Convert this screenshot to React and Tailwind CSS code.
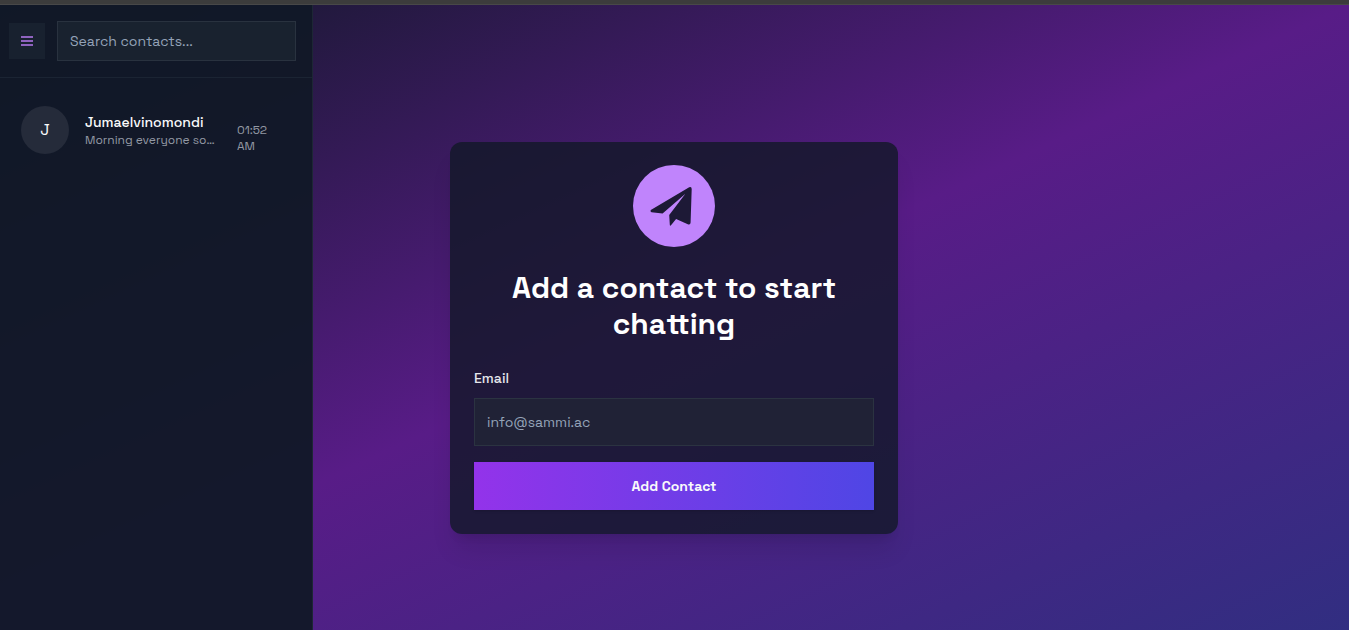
const contacts = [
  { name: "Jumaelvinomondi", preview: "Morning everyone so…", time: "01:52 AM" },
];

function PlaneBadge() {
  return (
    <svg viewBox="0 0 82 82" className="size-[82px]" aria-hidden="true">
      <circle cx="41" cy="41" r="41" fill="#c084fc" />
      <path
        fill="#1d1936"
        d="M17.8 45.1 L56.2 22.2 Q58.6 21.2 58.7 23.9 L57.6 57.5 Q57.4 60.4 54.8 59.3 L43.1 54.1 L38.2 60.1 Q37 61.5 36.8 59.7 L36.2 49.9 L52.4 28.8 L29.6 48.5 L18.5 47.2 Q16.7 46.5 17.8 45.1 Z"
      />
    </svg>
  );
}

function Sidebar() {
  return (
    <aside className="absolute inset-y-0 left-0 w-[313px] border-r border-[#1d2735] bg-[#111827]/95">
      <div className="flex items-center gap-3 border-b border-[#1b2433] py-4 pr-4 pl-[9px]">
        <button
          type="button"
          aria-label="Menu"
          className="flex size-9 shrink-0 items-center justify-center bg-[#18212f] text-[#8f63bf]"
        >
          <svg viewBox="0 0 12 10" className="h-[10px] w-3" fill="currentColor" aria-hidden="true">
            <path d="M0 0h12v2H0zM0 4h12v2H0zM0 8h12v2H0z" />
          </svg>
        </button>
        <input
          type="text"
          aria-label="Search contacts"
          placeholder="Search contacts..."
          className="h-10 min-w-0 flex-1 border border-[#29323f] bg-[#19222f] px-3 text-sm text-white outline-none placeholder:text-[#94a3b8]"
        />
      </div>
      <ul className="py-4 pr-4 pl-[9px]">
        {contacts.map((c) => (
          <li key={c.name} className="flex items-center gap-4 p-3">
            <div className="flex size-12 shrink-0 items-center justify-center rounded-full bg-[#252b3a] text-base text-gray-50">
              {c.name[0]}
            </div>
            <div className="w-[136px] shrink-0">
              <p className="text-sm font-medium text-gray-50">{c.name}</p>
              <p className="truncate text-xs text-[#9298a4]">{c.preview}</p>
            </div>
            <p className="mt-4 w-10 text-xs text-[#9298a4]">{c.time}</p>
          </li>
        ))}
      </ul>
    </aside>
  );
}

function AddContactCard() {
  return (
    <form className="w-full max-w-md rounded-xl bg-[#111827]/80 px-6 pt-[23px] pb-6 shadow-xl">
      <div className="flex justify-center">
        <PlaneBadge />
      </div>
      <h1 className="mt-[23px] text-center text-3xl leading-9 font-bold text-white">
        Add a contact to start chatting
      </h1>
      <label htmlFor="email" className="mt-6 block text-sm leading-6 font-medium text-gray-200">
        Email
      </label>
      <input
        id="email"
        type="email"
        placeholder="info@sammi.ac"
        className="mt-2 block h-12 w-full border border-[#2b3341] bg-[#202236] px-3 text-sm text-white outline-none placeholder:text-[#94a3b8]"
      />
      <button
        type="button"
        className="mt-4 h-12 w-full bg-linear-to-r/srgb from-[#9333ea] to-[#4f46e5] text-sm font-semibold text-gray-50 shadow-sm"
      >
        Add Contact
      </button>
    </form>
  );
}

export default function App() {
  return (
    <div className="flex h-screen flex-col overflow-hidden font-['Space_Grotesk','Inter',sans-serif]">
      <div className="h-[5px] shrink-0 border-b border-[#484848] bg-[#3c3c3c]" />
      <div className="relative flex-1 bg-linear-to-br/srgb from-[#111827] via-[#581c87] to-[#312e81]">
        <main className="flex h-full items-center justify-center pt-[41px] pr-px">
          <AddContactCard />
        </main>
        <Sidebar />
      </div>
    </div>
  );
}
